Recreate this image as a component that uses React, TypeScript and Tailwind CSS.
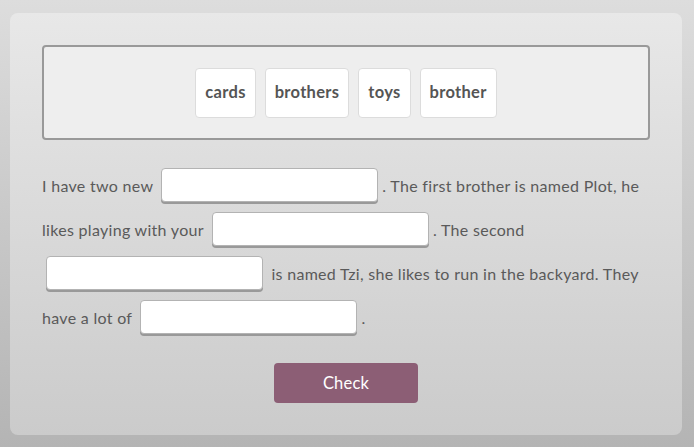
import React from 'react';

const WORDS = ['cards', 'brothers', 'toys', 'brother'];

function Blank() {
  return (
    <input
      type="text"
      className="inline-block align-middle -translate-y-[3px] w-[217px] h-[34px] mx-[4px] bg-white border border-[#b3b3b3] rounded-[4px] shadow-[0_2px_0_#999] outline-none"
    />
  );
}

export default function App() {
  return (
    <div
      className="min-h-[447px] bg-gradient-to-b from-[#dddddd] to-[#b4b4b4] pt-[13px] pb-[12px] pl-[10px] pr-[12px]"
      style={{ fontFamily: 'Lato, "Open Sans", sans-serif' }}
    >
      <div className="rounded-[8px] bg-gradient-to-b from-[#e8e8e8] to-[#cbcbcb] px-[32px] pt-[32px] pb-[32px]">
        <div className="h-[95px] border-2 border-[#999] rounded-[4px] bg-[#eeeeee] flex items-center justify-center gap-[9px]">
          {WORDS.map(word => (
            <div
              key={word}
              className="h-[50px] px-[9px] flex items-center bg-white border border-[#dcdcdc] rounded-[4px] text-[16.5px] font-bold tracking-[0.3px] text-[#555]"
            >
              {word}
            </div>
          ))}
        </div>

        <p className="mt-[24px] text-[16px] leading-[44px] tracking-[0.3px] text-[#5a5a5a]">
          I have two new <Blank />. The first brother is named Plot, he
          <br />
          likes playing with your <Blank />. The second
          <br />
          <Blank /> is named Tzi, she likes to run in the backyard. They
          <br />
          have a lot of <Blank />.
        </p>

        <div className="mt-[23px] flex justify-center">
          <button
            type="button"
            className="w-[144px] h-[40px] rounded-[4px] bg-[#8c5e75] text-white text-[16.5px] tracking-[0.2px]"
          >
            Check
          </button>
        </div>
      </div>
    </div>
  );
}
